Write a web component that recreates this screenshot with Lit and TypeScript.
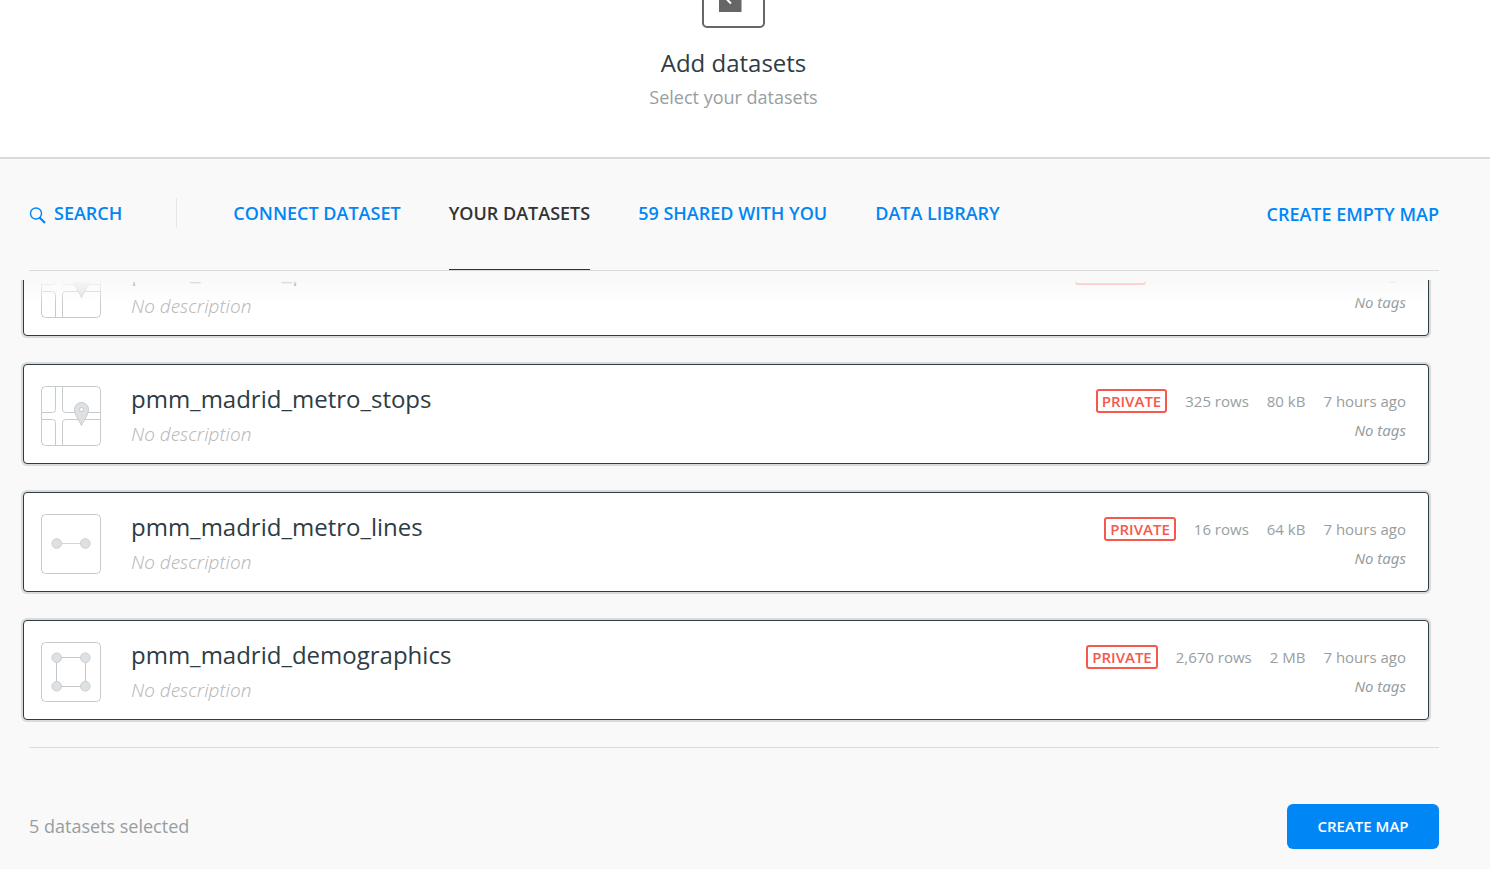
import { LitElement, html, svg, css } from "lit";
import { customElement, property } from "lit/decorators.js";

type Geometry = "point" | "line" | "polygon";

interface Dataset {
  name: string;
  geometry: Geometry;
  rows: string;
  size: string;
  updated: string;
}

const DATASETS: Dataset[] = [
  { name: "pmm_madrid_pois", geometry: "point", rows: "1,208 rows", size: "304 kB", updated: "7 hours ago" },
  { name: "pmm_madrid_metro_stops", geometry: "point", rows: "325 rows", size: "80 kB", updated: "7 hours ago" },
  { name: "pmm_madrid_metro_lines", geometry: "line", rows: "16 rows", size: "64 kB", updated: "7 hours ago" },
  { name: "pmm_madrid_demographics", geometry: "polygon", rows: "2,670 rows", size: "2 MB", updated: "7 hours ago" },
];

const GLYPHS = {
  point: svg`
    <path d="M14.5 .5V23.5Q14.5 26.5 11.5 26.5H.5M.5 33.5H11.5Q14.5 33.5 14.5 36.5V59.5M21.5 .5V23.5Q21.5 26.5 24.5 26.5H59.5M59.5 33.5H24.5Q21.5 33.5 21.5 36.5V59.5" fill="none" stroke="#c6cbce"/>
    <path d="M40.5 39.500C38 34 33.500 28.500 33.500 23.500a7 7 0 0 1 14 0C47.500 28.500 43 34 40.500 39.500z" fill="#dde1e4" stroke="#c6cbce"/>
    <circle cx="40.500" cy="23.500" r="2" fill="#fff" stroke="#c6cbce"/>`,
  line: svg`
    <path d="M16 29.500H44" stroke="#d3d7d9"/>
    <g fill="#dde1e4" stroke="#cbcfd2"><circle cx="15.700" cy="29.500" r="4.800"/><circle cx="44.300" cy="29.500" r="4.800"/></g>`,
  polygon: svg`
    <path d="M15.500 15.500H44.500V44.500H15.500z" fill="none" stroke="#c0c6ca"/>
    <g fill="#dde1e4" stroke="#cbcfd2"><circle cx="15.700" cy="15.700" r="4.800"/><circle cx="44.300" cy="15.700" r="4.800"/><circle cx="15.700" cy="44.300" r="4.800"/><circle cx="44.300" cy="44.300" r="4.800"/></g>`,
};

@customElement("dataset-row")
export class DatasetRow extends LitElement {
  @property({ attribute: false }) data!: Dataset;

  static styles = css`
    :host { display: block; flex: none; }
    .card {
      display: flex;
      align-items: flex-start;
      box-sizing: border-box;
      min-height: 100px;
      padding: 21px 22px 16px 17px;
      background: #fff;
      border: 1px solid #2e3c43;
      border-radius: 4px;
      box-shadow: 0 0 0 2px #d9dadb;
    }
    .glyph { flex: none; width: 60px; height: 60px; margin-right: 30px; }
    .main { flex: 1; min-width: 0; }
    .name { margin: -2px 0 0; font-size: 24px; line-height: 30px; font-weight: 400; color: #2e3c43; }
    .desc { margin: 8px 0 0; font-family: "Noto Sans", "Open Sans", sans-serif; font-size: 19px; line-height: 24px; font-style: italic; font-weight: 300; color: #bbb; }
    .side { display: flex; flex-direction: column; align-items: flex-end; gap: 6px; font-size: 15px; line-height: 22px; color: #979ea1; padding-top: 3px; }
    .meta { display: flex; align-items: center; gap: 18px; }
    .badge { box-sizing: border-box; height: 24px; padding: 0 4px; border: 2px solid #f6584c; border-radius: 3px; color: #f6584c; line-height: 20px; font-weight: 600; }
    .tags { font-family: "Noto Sans", "Open Sans", sans-serif; font-style: italic; }
  `;

  render() {
    const d = this.data;
    return html`
      <article class="card">
        <svg class="glyph" viewBox="0 0 60 60" aria-hidden="true">
          <rect x=".5" y=".5" width="59" height="59" rx="4" fill="none" stroke="#c6cbce" />
          ${GLYPHS[d.geometry]}
        </svg>
        <div class="main">
          <h3 class="name">${d.name}</h3>
          <p class="desc">No description</p>
        </div>
        <div class="side">
          <div class="meta">
            <span class="badge">PRIVATE</span>
            <span>${d.rows}</span>
            <span>${d.size}</span>
            <span>${d.updated}</span>
          </div>
          <span class="tags">No tags</span>
        </div>
      </article>
    `;
  }
}

@customElement("app-root")
export class AppRoot extends LitElement {
  static styles = css`
    :host {
      display: flex;
      flex-direction: column;
      min-height: 100vh;
      background: #f9f9f9;
      font-family: "Open Sans", sans-serif;
      color: #2e3c43;
    }
    .header {
      display: flex;
      flex-direction: column;
      align-items: center;
      justify-content: flex-end;
      box-sizing: border-box;
      height: 159px;
      padding: 0 52px 48px 29px;
      overflow: hidden;
      background: #fff;
      border-bottom: 2px solid #d9dadb;
    }
    .logo { flex: none; width: 63px; height: 64px; }
    .title { margin: 18px 0 0; font-size: 24px; line-height: 34px; font-weight: 400; }
    .subtitle { margin: 5px 0 0; font-size: 18px; line-height: 24px; color: #979ea1; }
    .nav {
      display: flex;
      box-sizing: border-box;
      height: 112px;
      margin: 0 51px 0 29px;
      border-bottom: 1px solid #d9dadb;
      font-size: 18px;
      line-height: 108px;
      font-weight: 600;
    }
    a { color: #0087f5; text-decoration: none; }
    .search { display: flex; gap: 8px; }
    .search svg { width: 17px; height: 18px; margin-top: 47px; }
    .divider { width: 1px; height: 30px; margin: 39px 56px 0 54px; background: #e5e6e7; }
    .tabs { display: flex; gap: 48px; }
    .tab.selected { color: #333; border-bottom: 1px solid #333; }
    .empty { margin-left: auto; line-height: 110px; }
    .list {
      position: relative;
      display: flex;
      flex: none;
      flex-direction: column;
      justify-content: flex-end;
      gap: 28px;
      box-sizing: border-box;
      height: 467px;
      margin-top: 9px;
      padding: 0 61px 27px 23px;
      overflow: hidden;
    }
    .fade { position: absolute; top: 0; left: 24px; right: 62px; height: 24px; background: linear-gradient(#f9f9f9 1px, rgba(249, 249, 249, 0.8) 3px, rgba(249, 249, 249, 0)); }
    .footer {
      display: flex;
      align-items: center;
      justify-content: space-between;
      margin: 0 51px 0 29px;
      padding: 56px 0 20px;
      border-top: 1px solid #d9dadb;
    }
    .count { padding-bottom: 2px; font-size: 18px; line-height: 24px; color: #979ea1; }
    .create {
      min-width: 152px;
      height: 45px;
      padding: 0 30px 2px;
      border: 0;
      border-radius: 6px;
      background: #0087f5;
      color: #fff;
      font: 600 15px/20px "Open Sans", sans-serif;
    }
  `;

  render() {
    return html`
      <header class="header">
        <svg class="logo" viewBox="0 0 63 64" aria-hidden="true">
          <rect x="1" y="1" width="61" height="62" rx="4" fill="none" stroke="#666" stroke-width="2" />
          <path d="M17 16H39.500V48H17z" fill="#666" />
          <path d="M29 39.500L23.500 34L29 28.500" fill="none" stroke="#fff" stroke-width="2" />
        </svg>
        <h1 class="title">Add datasets</h1>
        <p class="subtitle">Select your datasets</p>
      </header>
      <nav class="nav">
        <a class="search" href="#search">
          <svg viewBox="0 0 17 18" fill="none" stroke="#0087f5" aria-hidden="true">
            <circle cx="7" cy="7.500" r="5.500" stroke-width="1.400" />
            <path d="M10.500 11.500L16 17" stroke-width="2.300" />
          </svg>
          SEARCH
        </a>
        <span class="divider"></span>
        <div class="tabs">
          <a class="tab" href="#connect">CONNECT DATASET</a>
          <a class="tab selected" href="#yours" aria-current="page">YOUR DATASETS</a>
          <a class="tab" href="#shared">59 SHARED WITH YOU</a>
          <a class="tab" href="#library">DATA LIBRARY</a>
        </div>
        <a class="empty" href="#empty">CREATE EMPTY MAP</a>
      </nav>
      <main class="list">
        ${DATASETS.map((d) => html`<dataset-row .data=${d}></dataset-row>`)}
        <div class="fade"></div>
      </main>
      <footer class="footer">
        <span class="count">5 datasets selected</span>
        <button class="create" type="button">CREATE MAP</button>
      </footer>
    `;
  }
}
